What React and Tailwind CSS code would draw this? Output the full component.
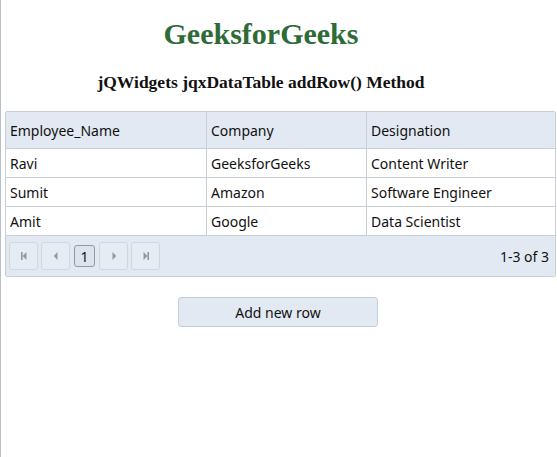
const columns = [
  { label: "Employee_Name", w: "w-[201px]" },
  { label: "Company", w: "w-[160px]" },
  { label: "Designation", w: "flex-1" },
];

const rows = [
  ["Ravi", "GeeksforGeeks", "Content Writer"],
  ["Sumit", "Amazon", "Software Engineer"],
  ["Amit", "Google", "Data Scientist"],
];

function PagerIcon({ kind }) {
  // tiny jqx-style arrows
  const fill = "#8f99a3";
  return (
    <svg width="8" height="10" viewBox="0 0 8 10">
      {kind === "first" && (
        <>
          <rect x="1" y="1" width="1.6" height="8" fill={fill} />
          <path d="M6.5 1 L2.6 5 L6.5 9 Z" fill={fill} />
        </>
      )}
      {kind === "prev" && <path d="M5.5 1 L1.8 5 L5.5 9 Z" fill={fill} />}
      {kind === "next" && <path d="M2.5 1 L6.2 5 L2.5 9 Z" fill={fill} />}
      {kind === "last" && (
        <>
          <path d="M1.5 1 L5.4 5 L1.5 9 Z" fill={fill} />
          <rect x="5.4" y="1" width="1.6" height="8" fill={fill} />
        </>
      )}
    </svg>
  );
}

function PagerButton({ kind, className = "" }) {
  return (
    <div
      className={`w-[29px] h-[28px] flex items-center justify-center rounded-[3px] border border-[#d0d7df] bg-[#e6ecf3] ${className}`}
    >
      <PagerIcon kind={kind} />
    </div>
  );
}

export default function App() {
  return (
    <div className="w-[557px] h-[457px] bg-white border-l border-[#b7c0ca] font-['Noto_Sans',sans-serif] text-[#111]">
      <div className="w-[520px] flex flex-col items-center font-['Liberation_Serif',serif] font-bold">
        <h1 className="mt-[17px] text-[30px] leading-[34px] text-[#2f6b37]">GeeksforGeeks</h1>
        <h3 className="mt-[20px] text-[17.5px] leading-[22px] text-[#111]">
          jQWidgets jqxDataTable addRow() Method
        </h3>
      </div>

      <div className="ml-[4px] mt-[18px] w-[551px] border border-[#c6ced8] rounded-[2px] overflow-hidden text-[14px]">
        <div className="flex h-[37px] bg-[#e3e9f2] border-b border-[#c6ced8]">
          {columns.map((c, i) => (
            <div
              key={c.label}
              className={`${c.w} flex items-center pl-[4px] ${i < 2 ? "border-r border-[#c6ced8]" : ""}`}
            >
              {c.label}
            </div>
          ))}
        </div>
        {rows.map((r, ri) => (
          <div
            key={ri}
            className={`flex bg-white ${ri < 2 ? "h-[29px] border-b border-[#c6ced8]" : "h-[28px]"}`}
          >
            {r.map((cell, i) => (
              <div
                key={i}
                className={`${columns[i].w} flex items-center pl-[4px] ${i < 2 ? "border-r border-[#c6ced8]" : ""}`}
              >
                {cell}
              </div>
            ))}
          </div>
        ))}
        <div className="flex items-center h-[41px] bg-[#e3e9f2] border-t border-[#c6ced8] pl-[3px] pr-[6px]">
          <PagerButton kind="first" />
          <PagerButton kind="prev" className="ml-[3px]" />
          <div className="ml-[4px] w-[21px] h-[22px] flex items-center justify-center rounded-[3px] border border-[#8f9aa5] bg-[#dbe3ec] text-[14px]">
            1
          </div>
          <PagerButton kind="next" className="ml-[4px]" />
          <PagerButton kind="last" className="ml-[3px]" />
          <div className="ml-auto">1-3 of 3</div>
        </div>
      </div>

      <div className="mt-[20px] flex">
        <button className="ml-[177px] w-[200px] h-[30px] rounded-[3px] border border-[#c6ced8] bg-[#e3e9f2] text-[14px] text-[#111]">
          Add new row
        </button>
      </div>
    </div>
  );
}
